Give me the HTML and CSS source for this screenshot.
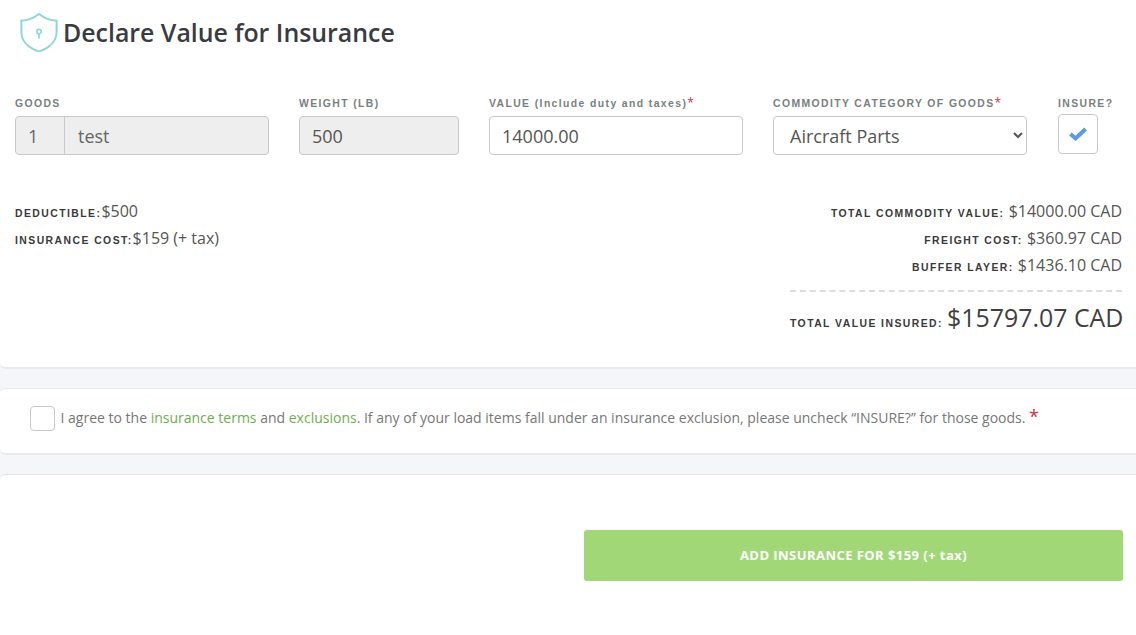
FILE: index.html
```html
<!DOCTYPE html>
<html lang="en">
<head>
<meta charset="utf-8">
<title>Declare Value for Insurance</title>
<link rel="stylesheet" href="styles.css">
</head>
<body>
<section class="card card-main">
  <header class="heading">
    <svg class="shield" viewBox="0 0 38 40" width="38" height="40" fill="none" stroke="#8ed6d8" aria-hidden="true">
      <path d="M19 2C23.5 5.4 29.5 8.4 36.6 8.8V20C36.6 29 29.5 36 19 39.6C8.5 36 1.4 29 1.4 20V8.8C8.5 8.4 14.5 5.4 19 2Z" stroke-width="2"/>
      <circle cx="19" cy="19.6" r="2.2" stroke-width="1.6"/>
      <path d="M19 21.6V26.4" stroke-width="1.7"/>
    </svg>
    <h1>Declare Value for Insurance</h1>
  </header>

  <div class="fields">
    <div class="field field-goods">
      <label class="label">GOODS</label>
      <div class="goods-box">
        <span class="goods-qty">1</span>
        <span class="goods-name">test</span>
      </div>
    </div>
    <div class="field field-weight">
      <label class="label">WEIGHT (LB)</label>
      <div class="input readonly">500</div>
    </div>
    <div class="field field-value">
      <label class="label">VALUE (Include duty and taxes)<span class="req">*</span></label>
      <input class="input" type="text" value="14000.00">
    </div>
    <div class="field field-cat">
      <label class="label">COMMODITY CATEGORY OF GOODS<span class="req">*</span></label>
      <select class="input select"><option>Aircraft Parts</option></select>
    </div>
    <div class="field field-insure">
      <label class="label">INSURE?</label>
      <div class="check-box">
        <svg viewBox="0 0 18 14" width="18" height="14" aria-hidden="true"><path d="M1.4 7L6.6 11.4L16.6 2" fill="none" stroke="#5b9ae8" stroke-width="4"/></svg>
      </div>
    </div>
  </div>

  <div class="summary">
    <div class="summary-left">
      <p class="row"><span class="key">DEDUCTIBLE:</span>$500</p>
      <p class="row"><span class="key">INSURANCE COST:</span>$159 (+ tax)</p>
    </div>
    <div class="summary-right">
      <p class="row"><span class="key">TOTAL COMMODITY VALUE:</span> $14000.00 CAD</p>
      <p class="row"><span class="key">FREIGHT COST:</span> $360.97 CAD</p>
      <p class="row"><span class="key">BUFFER LAYER:</span> $1436.10 CAD</p>
      <p class="row total"><span class="key">TOTAL VALUE INSURED:</span> <span class="total-num">$15797.07 CAD</span></p>
    </div>
  </div>
</section>

<section class="card card-terms">
  <span class="agree-box"></span>
  <p class="terms">I agree to the <a href="#">insurance terms</a> and <a href="#">exclusions</a>. If any of your load items fall under an insurance exclusion, please uncheck “INSURE?” for those goods. <span class="terms-req">*</span></p>
</section>

<section class="card card-action">
  <button class="submit" type="button">ADD INSURANCE FOR $159 (+ tax)</button>
</section>
</body>
</html>
```

FILE: styles.css
```css
* { box-sizing: border-box; }
html, body { margin: 0; padding: 0; }
body {
  width: 1136px;
  height: 635px;
  overflow: hidden;
  background: #f5f6fa;
  font-family: "Open Sans", sans-serif;
  color: #3a3a3a;
}
p { margin: 0; }
.card {
  background: #fff;
  border-bottom: 2px solid #e9eaee;
}
.card-main {
  height: 369px;
  padding: 12px 14px 0 15px;
  border-bottom-left-radius: 6px;
}
.heading {
  display: flex;
  align-items: center;
  gap: 5px;
  height: 40px;
  padding-left: 5px;
}
.shield { flex: none; }
h1 {
  margin: 0;
  font-size: 24.9px;
  line-height: 40px;
  font-weight: 600;
  color: #383b40;
}
.fields {
  display: flex;
  gap: 30px;
  margin-top: 44px;
}
.field { display: flex; flex-direction: column; }
.field-goods { width: 254px; }
.field-weight { width: 160px; }
.field-value { width: 254px; }
.field-cat { width: 254px; }
.field-insure { width: 56px; margin-left: 1px; }
.label {
  display: block;
  height: 20px;
  font-family: "Liberation Sans", sans-serif;
  font-size: 10.4px;
  line-height: 16px;
  font-weight: 700;
  letter-spacing: 1.4px;
  color: #7a7f7f;
  white-space: nowrap;
}
.req {
  color: #c8324a;
  font-family: "Open Sans", sans-serif;
  font-size: 12px;
  font-weight: 400;
  letter-spacing: 0;
  line-height: 0;
}
.input {
  width: 100%;
  height: 39px;
  padding: 0 12px;
  border: 1px solid #c9c9c9;
  border-radius: 4px;
  background: #fff;
  font-family: "Open Sans", sans-serif;
  font-size: 18px;
  line-height: 38px;
  color: #555;
  outline: none;
}
.readonly { background: #eee; }
.goods-box {
  display: flex;
  height: 39px;
  border: 1px solid #c9c9c9;
  border-radius: 4px;
  background: #eee;
  font-size: 18px;
  line-height: 38px;
  color: #666;
}
.goods-qty { width: 49px; padding-left: 12px; border-right: 1px solid #c9c9c9; }
.goods-name { padding-left: 13px; }
.check-box {
  display: flex;
  align-items: center;
  justify-content: center;
  width: 40px;
  height: 40px;
  margin-top: -2px;
  border: 1px solid #c9c9c9;
  border-radius: 4px;
  background: #fff;
}
.summary {
  display: flex;
  justify-content: space-between;
  margin-top: 43px;
}
.row {
  height: 27px;
  font-size: 16px;
  line-height: 27px;
  color: #555;
  white-space: nowrap;
}
.key {
  font-family: "Liberation Sans", sans-serif;
  font-size: 10.4px;
  font-weight: 700;
  letter-spacing: 1.45px;
  color: #3a3a3a;
}
.summary-right { width: 332px; text-align: right; }
.total {
  height: 47px;
  margin-top: 11px;
  padding-top: 5px;
  border-top: 2px dashed #ddd;
  line-height: 40px;
}
.total-num { font-size: 24.9px; color: #3f3f3f; }
.card-terms {
  display: flex;
  align-items: center;
  gap: 5.5px;
  height: 67px;
  margin-top: 19px;
  padding: 0 0 5px 30px;
  border-top: 1px solid #e9eaee;
  border-radius: 6px 0 0 6px;
}
.agree-box {
  flex: none;
  width: 25px;
  height: 25px;
  border: 1px solid #c9c9c9;
  border-radius: 4px;
  background: #fff;
}
.terms {
  margin-bottom: 3px;
  font-size: 14px;
  line-height: 22px;
  color: #777;
  white-space: nowrap;
}
.terms a { color: #6fae4f; text-decoration: none; }
.terms-req { color: #c8324a; font-size: 18px; }
.card-action {
  display: flex;
  justify-content: flex-end;
  height: 170px;
  margin-top: 19px;
  padding: 55px 13px 0 0;
  border-top: 1px solid #e2e3e7;
  border-bottom: 0;
  border-radius: 6px 0 0 0;
}
.submit {
  width: 539px;
  height: 51px;
  padding: 0 0 2px;
  border: 0;
  border-radius: 3px;
  background: #a2d777;
  color: #fff;
  font-family: "Open Sans", sans-serif;
  font-size: 13px;
  font-weight: 700;
  letter-spacing: 0.45px;
}
```
